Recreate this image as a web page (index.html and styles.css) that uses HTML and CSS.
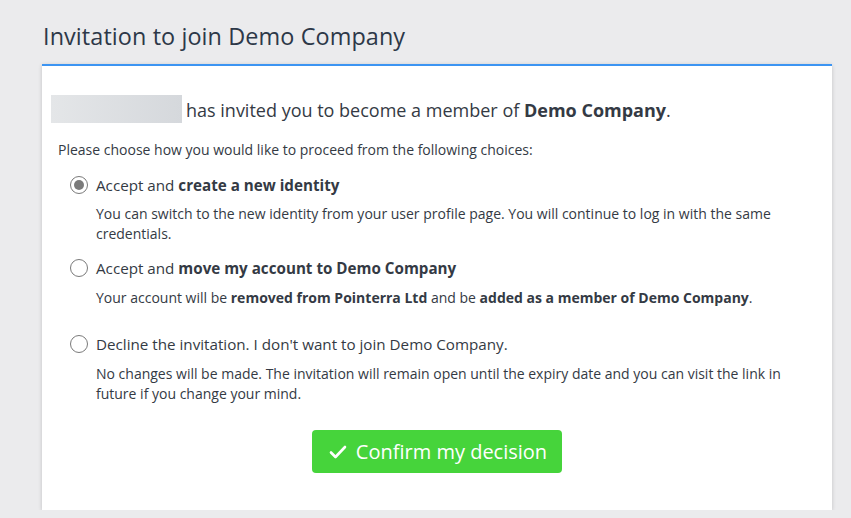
FILE: index.html
```html
<!DOCTYPE html>
<html>
<head>
<meta charset="utf-8">
<link rel="stylesheet" href="styles.css">
</head>
<body>
<div class="page">
  <h1 class="title">Invitation to join Demo Company</h1>
  <div class="card">
    <p class="lead"><span class="blur"></span>has invited you to become a member of <b>Demo Company</b>.</p>
    <p class="intro">Please choose how you would like to proceed from the following choices:</p>
    <div class="option">
      <div class="opt-row"><span class="radio checked"></span><span>Accept and <b>create a new identity</b></span></div>
      <p class="desc">You can switch to the new identity from your user profile page. You will continue to log in with the same credentials.</p>
    </div>
    <div class="option">
      <div class="opt-row"><span class="radio"></span><span>Accept and <b>move my account to Demo Company</b></span></div>
      <p class="desc">Your account will be <b>removed from Pointerra Ltd</b> and be <b>added as a member of Demo Company</b>.</p>
    </div>
    <div class="option">
      <div class="opt-row"><span class="radio"></span><span>Decline the invitation. I don't want to join Demo Company.</span></div>
      <p class="desc">No changes will be made. The invitation will remain open until the expiry date and you can visit the link in future if you change your mind.</p>
    </div>
    <div class="actions">
      <button class="btn"><svg width="18" height="14" viewBox="0 0 18 14"><path d="M2 7.5 L6.5 12 L16 2" fill="none" stroke="#fff" stroke-width="2.6" stroke-linecap="round" stroke-linejoin="round"/></svg>Confirm my decision</button>
    </div>
  </div>
</div>
</body>
</html>
```
FILE: styles.css
```css
html, body {
  margin: 0;
  padding: 0;
  background: #ebebed;
  font-family: "Open Sans", "Liberation Sans", sans-serif;
  color: #343a44;
}
.page {
  padding: 21px 19px 0 42px;
}
.title {
  margin: 0 0 13px 1px;
  font-family: "Open Sans", sans-serif;
  font-weight: 400;
  font-size: 23.4px;
  line-height: 30px;
  color: #2d3848;
  letter-spacing: 0.1px;
}
.card {
  background: #fff;
  border-top: 2px solid #3c94f2;
  box-shadow: 0 1px 4px rgba(0,0,0,0.18);
  padding: 30px 45px 37px 9px;
}
.lead {
  margin: 0;
  display: flex;
  align-items: center;
  font-size: 18px;
  line-height: 28px;
  white-space: pre;
}
.lead b { font-weight: 700; }
.blur {
  display: inline-block;
  width: 131px;
  height: 28px;
  background: linear-gradient(90deg, #e4e6e8, #d5d8dc);
  margin-right: 4px;
  margin-top: -2px;
}
.intro {
  margin: 16px 0 0 7px;
  font-size: 14px;
  line-height: 20px;
}
.option {
  margin-left: 18px;
}
.opt-row {
  display: flex;
  align-items: center;
  font-size: 15.2px;
  line-height: 22px;
  margin-top: 13px;
}
.option:first-of-type .opt-row { margin-top: 14px; }
.radio {
  width: 18px;
  height: 18px;
  border: 1.5px solid #7a7a7a;
  border-radius: 50%;
  box-sizing: border-box;
  margin: 0 8px 0 1px;
  flex: none;
  position: relative;
  background: #fff;
}
.radio.checked::after {
  content: "";
  position: absolute;
  left: 2.5px;
  top: 2.5px;
  width: 10px;
  height: 10px;
  border-radius: 50%;
  background: #7a7a7a;
}
.desc {
  margin: 9px 0 0 27px;
  font-size: 14px;
  line-height: 20px;
}
.option:first-of-type .desc { margin-top: 8px; }
.option:nth-of-type(2) .desc { margin-bottom: 25px; }
.actions {
  display: flex;
  justify-content: center;
  margin-top: 26px;
  padding-left: 36px;
}
.btn {
  display: flex;
  align-items: center;
  gap: 9px;
  background: #46d43b;
  border: none;
  border-radius: 4px;
  color: #fff;
  font-family: "Open Sans", sans-serif;
  font-size: 20px;
  height: 43px;
  padding: 0 15px 0 17px;
}
```
